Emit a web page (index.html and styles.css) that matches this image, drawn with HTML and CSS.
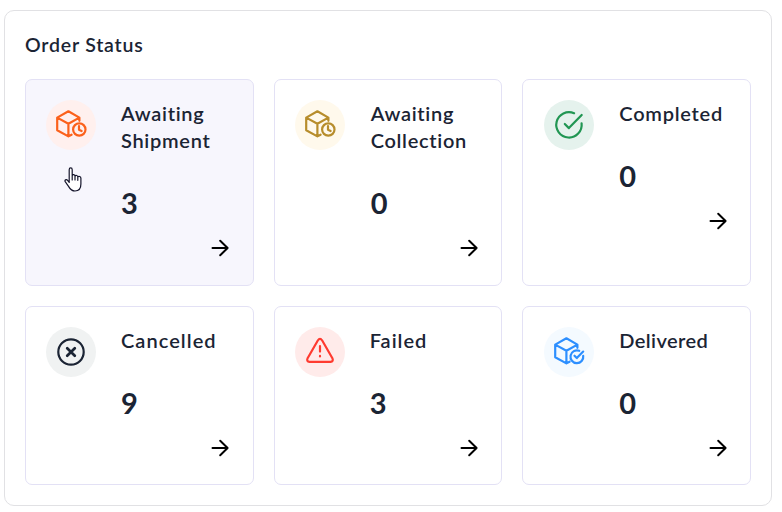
FILE: index.html
```html
<!DOCTYPE html>
<html lang="en">
<head>
<meta charset="utf-8">
<title>Order Status</title>
<link rel="stylesheet" href="styles.css">
</head>
<body>
<svg class="defs" aria-hidden="true">
  <symbol id="box" viewBox="0 0 50 50"><path d="M33.4 20.8V17.6L22.4 11.3 11.2 17.6V30.2L22.4 36.4 25.6 34.7M11.2 17.6 22.4 23.8 33.4 17.6M22.4 23.8V36.4"/></symbol>
  <symbol id="arrow" viewBox="0 0 20 20"><path d="M2.5 10H17.6M10.2 2.8 17.6 10 10.2 17.2"/></symbol>
</svg>
<section class="panel">
  <h1 class="title">Order Status</h1>
  <div class="grid">
    <article class="card active">
      <svg class="icon orange" viewBox="0 0 50 50"><use href="#box"/><circle cx="33.3" cy="29.5" r="6.2"/><path d="M33 26V29.8L35.6 31.1"/></svg>
      <div class="body"><h2 class="label shipment">Awaiting Shipment</h2><p class="count">3</p></div>
      <svg class="arrow"><use href="#arrow"/></svg>
      <svg class="cursor" viewBox="0 0 18 25"><path d="M5.2 15.4V2.7C5.2.3 8.2.3 8.2 2.7V8.6C8.6 7.2 11 7.4 11 9.2 11.6 8 13.8 8.3 13.8 10 14.6 9 16.9 9.3 16.9 11.3V17C16.9 21.4 14.7 24 11 24 7.6 24 6.2 22.3 4.7 19.6L1.2 14.7C.2 13.2 2.3 11.8 3.6 13.3ZM8.2 8.6V13M11 9.4V13M13.8 10V13.3"/></svg>
    </article>
    <article class="card">
      <svg class="icon gold" viewBox="0 0 50 50"><use href="#box"/><circle cx="33.3" cy="29.5" r="6.2"/><path d="M33 26V29.8L35.6 31.1"/></svg>
      <div class="body inset"><h2 class="label collection">Awaiting Collection</h2><p class="count">0</p></div>
      <svg class="arrow"><use href="#arrow"/></svg>
    </article>
    <article class="card last">
      <svg class="icon green" viewBox="0 0 50 50"><path d="M30.1 13.2A12.7 12.7 0 1 0 37.6 23.4M20.8 24 24.9 28.1 37.7 15"/></svg>
      <div class="body"><h2 class="label completed">Completed</h2><p class="count">0</p></div>
      <svg class="arrow"><use href="#arrow"/></svg>
    </article>
    <article class="card">
      <svg class="icon dark" viewBox="0 0 50 50"><circle cx="25" cy="25" r="12.7"/><path class="cross" d="M21.2 21.2 28.8 28.8M28.8 21.2 21.2 28.8"/></svg>
      <div class="body"><h2 class="label cancelled">Cancelled</h2><p class="count">9</p></div>
      <svg class="arrow"><use href="#arrow"/></svg>
    </article>
    <article class="card">
      <svg class="icon red" viewBox="0 0 50 50"><path d="M22.8 13.5Q25 10.3 27.2 13.5L37.4 31.2Q38.8 34.6 35.5 34.9H14.5Q11.2 34.6 12.6 31.2ZM25 19.2V24.6M25 28.9V29.5"/></svg>
      <div class="body"><h2 class="label failed">Failed</h2><p class="count">3</p></div>
      <svg class="arrow"><use href="#arrow"/></svg>
    </article>
    <article class="card last">
      <svg class="icon blue" viewBox="0 0 50 50"><use href="#box"/><path d="M35.2 23.8A6.4 6.4 0 1 0 39.2 28.8M30.5 28.7 32.8 31.1 39.2 24.6"/></svg>
      <div class="body"><h2 class="label delivered">Delivered</h2><p class="count">0</p></div>
      <svg class="arrow"><use href="#arrow"/></svg>
    </article>
  </div>
</section>
</body>
</html>
```
FILE: styles.css
```css
* { box-sizing: border-box; }
body {
  margin: 0;
  padding: 10px 10px 6px 4px;
  background: #fff;
  color: #1b2434;
  font-family: Lato, "Liberation Sans", sans-serif;
}
.defs { position: absolute; width: 0; height: 0; }
svg { fill: none; stroke: currentColor; stroke-width: 2.2; stroke-linecap: round; stroke-linejoin: round; }
.panel {
  width: 768px;
  height: 496px;
  padding: 20px;
  border: 1px solid #e1e1e4;
  border-radius: 10px;
}
.title { margin: 0 0 20px; font-size: 19.5px; line-height: 28px; font-weight: 600; letter-spacing: .8px; }
.grid { display: grid; grid-template-columns: repeat(3, 1fr); grid-template-rows: 207px 179px; gap: 20px; }
.card {
  position: relative;
  display: grid;
  grid-template-columns: 50px 1fr;
  align-content: start;
  column-gap: 25px;
  padding: 20px;
  border: 1px solid #e3e1f5;
  border-radius: 7px;
}
.last { padding-left: 21px; }
.active { background: #f7f6fd; }
.icon { width: 50px; height: 50px; border-radius: 50%; }
.orange { color: #fb611b; background: #fff0ee; }
.gold { color: #b78d2c; background: #fff9ec; }
.green { color: #219653; background: #e5f2ed; }
.dark { color: #1b2434; background: #f0f2f2; }
.red { color: #ff3b30; background: #ffebea; }
.blue { color: #2d8fff; background: #f4faff; }
.cross { stroke-width: 2.7; }
.inset { padding-left: 1px; }
.label { margin: 0; font-size: 20px; line-height: 27px; font-weight: 600; letter-spacing: .5px; }
.shipment, .collection { letter-spacing: .7px; }
.completed { letter-spacing: .75px; }
.cancelled { letter-spacing: 1.05px; }
.failed { letter-spacing: 1px; }
.delivered { letter-spacing: .4px; }
.count { margin: 29px 0 0; font-size: 29px; line-height: 40px; font-weight: 700; }
.arrow { grid-column: 2; justify-self: end; width: 20px; height: 20px; margin: 15px 2.5px 0 0; color: #000; stroke-width: 2; }
.cursor { position: absolute; left: 38px; top: 87px; width: 18px; height: 25px; fill: #fff; stroke: #14142b; stroke-width: 1.2; }
```
